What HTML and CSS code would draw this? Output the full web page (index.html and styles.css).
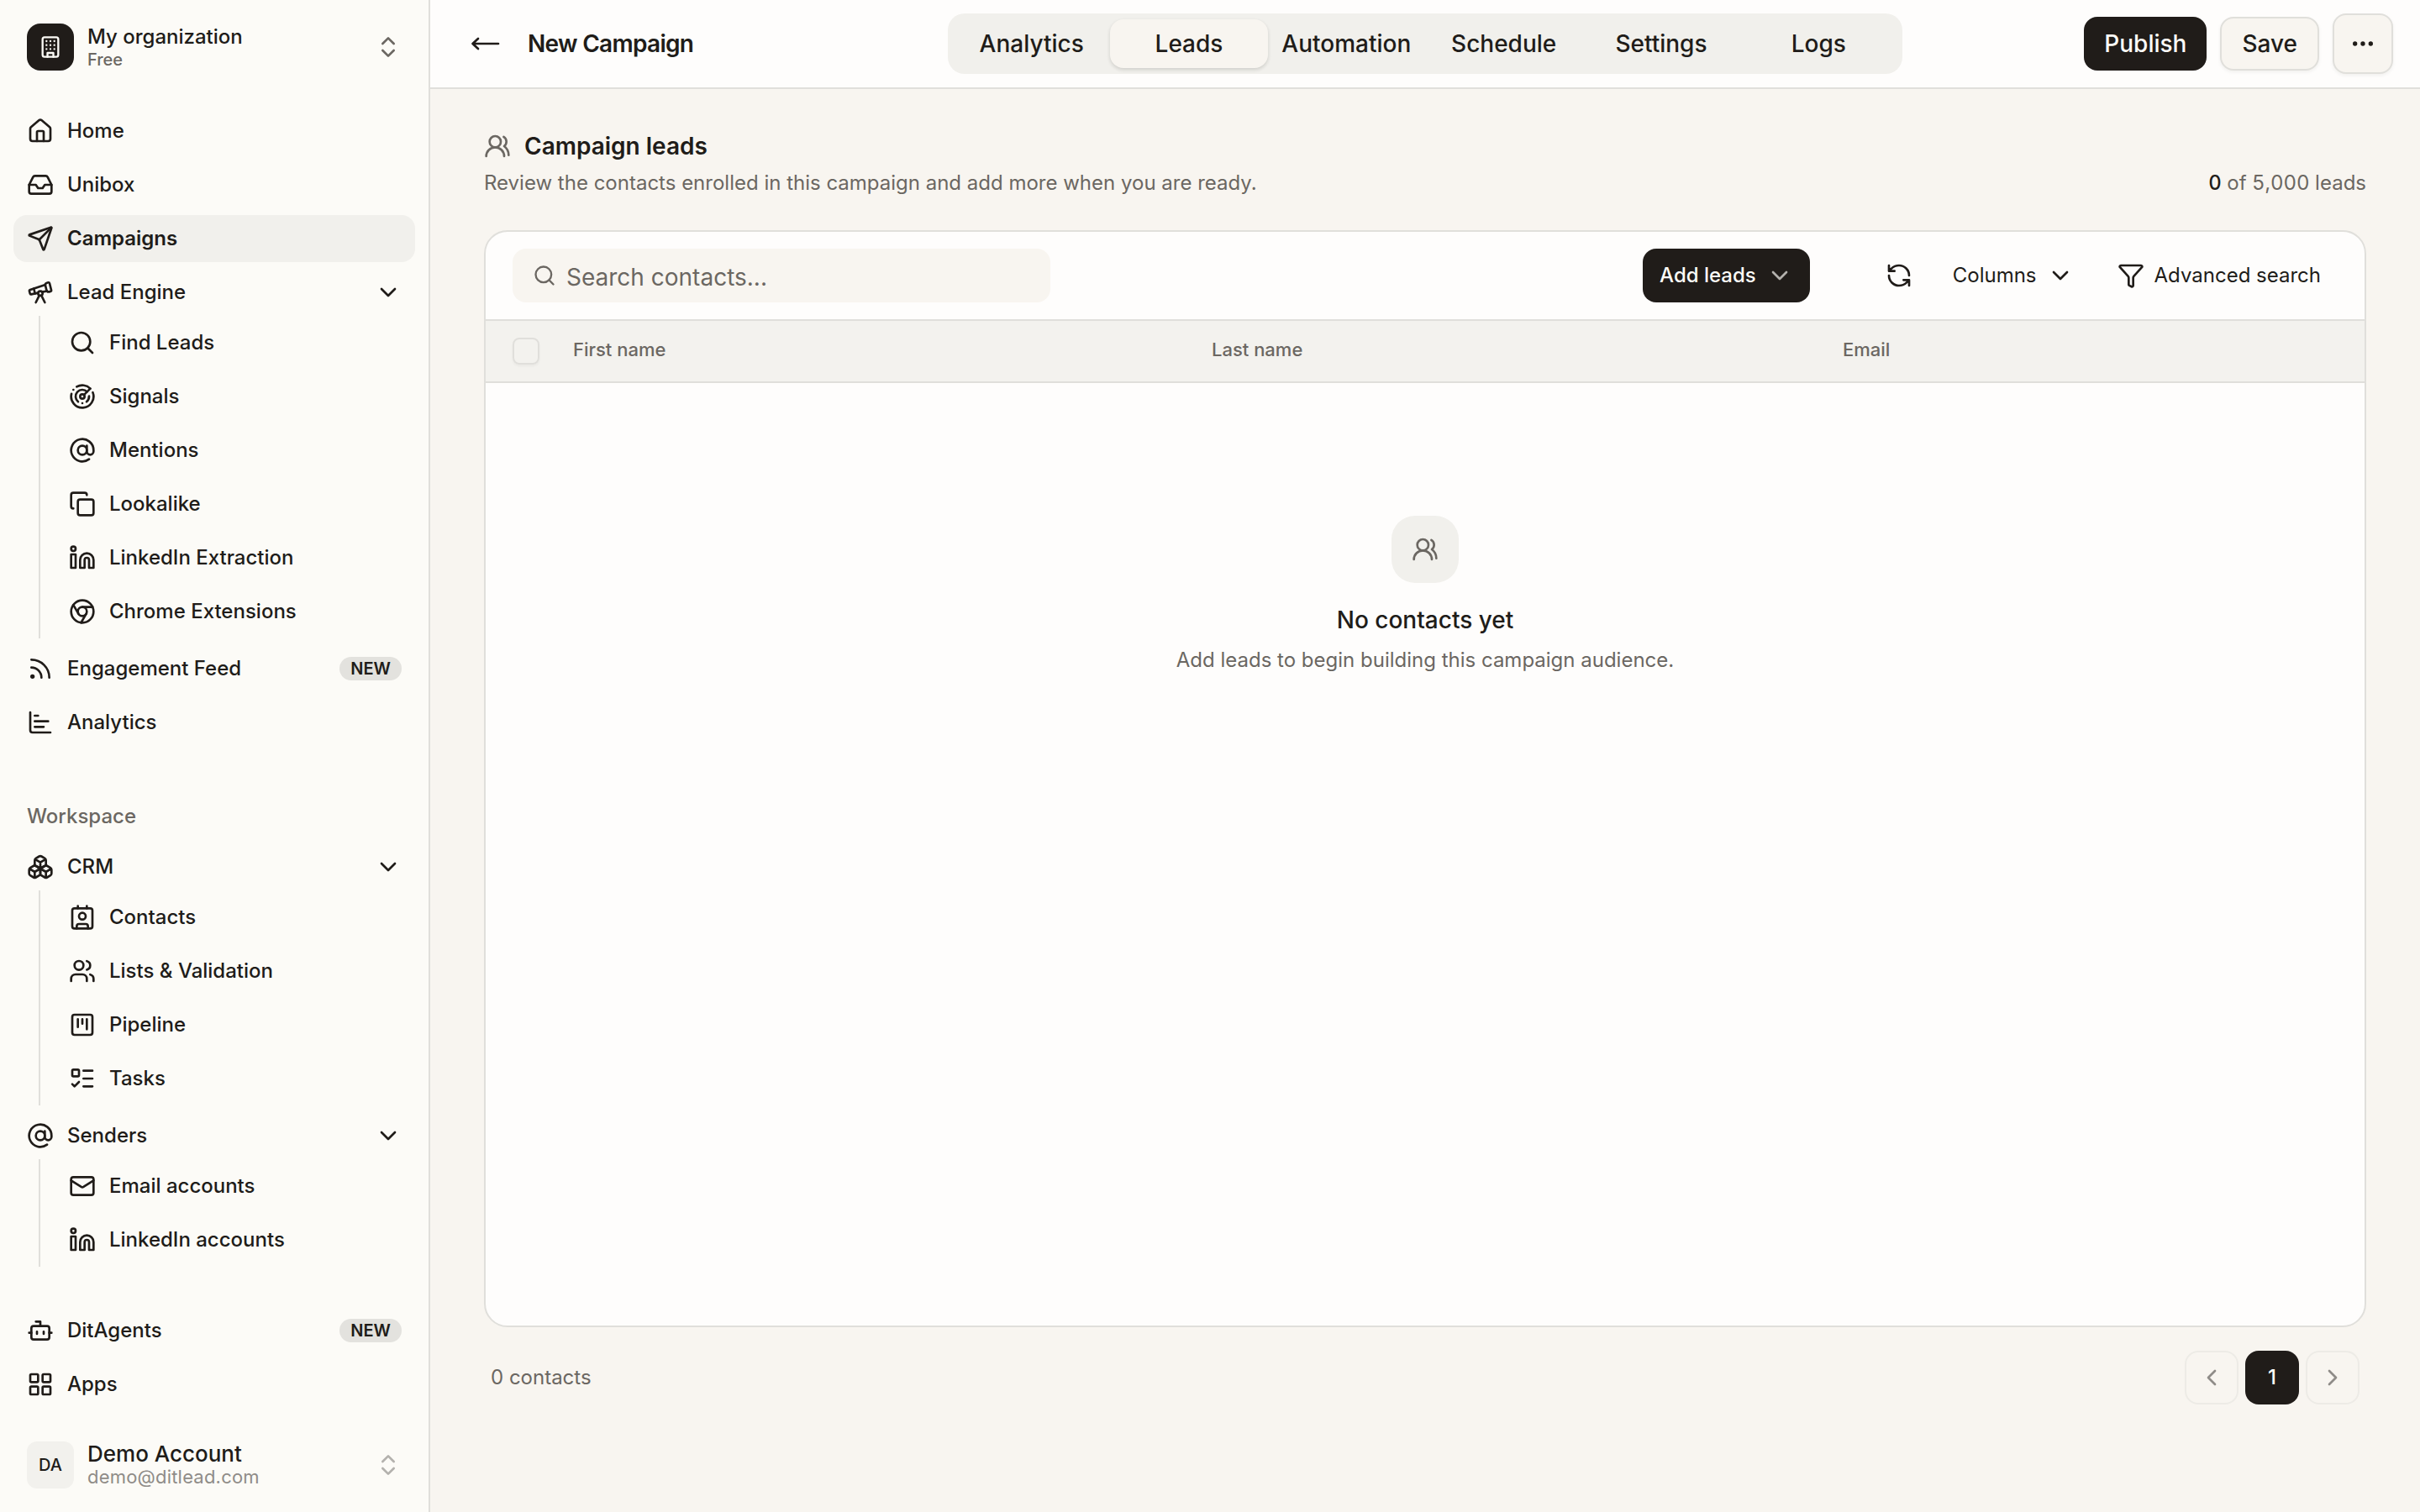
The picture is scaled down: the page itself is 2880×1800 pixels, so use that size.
FILE: index.html
```
<!DOCTYPE html>
<html lang="en">
<head>
  <meta charset="UTF-8" />
  <meta name="viewport" content="width=device-width,initial-scale=1.0" />
  <title>New Campaign | Leads</title>
  <link rel="stylesheet" href="styles.css">
</head>
<body>

<!-- SIDEBAR -->
<aside class="sidebar">
  <div class="org">
    <div class="org-logo">
      <svg class="icon" viewBox="0 0 24 24"><rect x="4" y="2" width="16" height="20" rx="2"/><path d="M9 22v-4h6v4M8 6h.01M16 6h.01M12 6h.01M12 10h.01M12 14h.01M16 10h.01M16 14h.01M8 10h.01M8 14h.01"/></svg>
    </div>
    <div class="who">
      <span class="who-name">My organization</span>
      <span class="who-plan">Free</span>
    </div>
    <svg class="icon end muted" viewBox="0 0 24 24"><path d="m7 15 5 5 5-5M7 9l5-5 5 5"/></svg>
  </div>

  <nav class="nav">
    <a class="nav-item" href="#"><svg class="icon" viewBox="0 0 24 24"><path d="M15 21v-8a1 1 0 0 0-1-1h-4a1 1 0 0 0-1 1v8"/><path d="M3 10a2 2 0 0 1 .709-1.528l7-5.999a2 2 0 0 1 2.582 0l7 5.999A2 2 0 0 1 21 10v9a2 2 0 0 1-2 2H5a2 2 0 0 1-2-2z"/></svg>Home</a>
    <a class="nav-item" href="#"><svg class="icon" viewBox="0 0 24 24"><path d="M22 12h-6l-2 3h-4l-2-3H2"/><path d="M5.45 5.11 2 12v6a2 2 0 0 0 2 2h16a2 2 0 0 0 2-2v-6l-3.45-6.89A2 2 0 0 0 16.76 4H7.24a2 2 0 0 0-1.79 1.11z"/></svg>Unibox</a>
    <a class="nav-item active" href="#"><svg class="icon" viewBox="0 0 24 24"><path d="M14.536 21.686a.5.5 0 0 0 .937-.024l6.5-19a.496.496 0 0 0-.635-.635l-19 6.5a.5.5 0 0 0-.024.937l7.93 3.18a2 2 0 0 1 1.112 1.11z"/><path d="m21.854 2.147-10.94 10.939"/></svg>Campaigns</a>
    <a class="nav-item" href="#"><svg class="icon" viewBox="0 0 24 24"><path d="m10.065 12.493-6.18 1.318a.934.934 0 0 1-1.108-.702l-.537-2.15a1.07 1.07 0 0 1 .691-1.265l13.504-4.44M13.56 11.747l4.332-.924M16 21l-3.105-6.21"/><path d="M16.485 5.94a2 2 0 0 1 1.455-2.425l1.09-.272a1 1 0 0 1 1.212.727l1.515 6.06a1 1 0 0 1-.727 1.213l-1.09.272a2 2 0 0 1-2.425-1.455zM6.158 8.633l1.114 4.456M8 21l3.105-6.21"/><circle cx="12" cy="13" r="2"/></svg>Lead Engine<svg class="icon end" viewBox="0 0 24 24"><path d="m6 9 6 6 6-6"/></svg></a>
    <div class="subnav">
      <a class="nav-item" href="#"><svg class="icon" viewBox="0 0 24 24"><path d="m21 21-4.34-4.34"/><circle cx="11" cy="11" r="8"/></svg>Find Leads</a>
      <a class="nav-item" href="#"><svg class="icon" viewBox="0 0 24 24"><path d="M19.07 4.93A10 10 0 0 0 6.99 3.34M4 6h.01M2.29 9.62A10 10 0 1 0 21.31 8.35"/><path d="M16.24 7.76A6 6 0 1 0 8.23 16.67M12 18h.01M17.99 11.66A6 6 0 0 1 15.77 16.67"/><circle cx="12" cy="12" r="2"/><path d="m13.41 10.59 5.66-5.66"/></svg>Signals</a>
      <a class="nav-item" href="#"><svg class="icon" viewBox="0 0 24 24"><circle cx="12" cy="12" r="4"/><path d="M16 8v5a3 3 0 0 0 6 0v-1a10 10 0 1 0-4 8"/></svg>Mentions</a>
      <a class="nav-item" href="#"><svg class="icon" viewBox="0 0 24 24"><rect x="8" y="8" width="14" height="14" rx="2"/><path d="M4 16c-1.1 0-2-.9-2-2V4c0-1.1.9-2 2-2h10c1.1 0 2 .9 2 2"/></svg>Lookalike</a>
      <a class="nav-item" href="#"><svg class="icon" viewBox="0 0 24 24"><path d="M16 8a6 6 0 0 1 6 6v7h-4v-7a2 2 0 0 0-4 0v7h-4v-7a6 6 0 0 1 6-6z"/><rect x="2" y="9" width="4" height="12"/><circle cx="4" cy="4" r="2"/></svg>LinkedIn Extraction</a>
      <a class="nav-item" href="#"><svg class="icon" viewBox="0 0 24 24"><circle cx="12" cy="12" r="10"/><circle cx="12" cy="12" r="4"/><path d="M21.17 8H12M3.95 6.06 8.54 14M10.88 21.94 15.46 14"/></svg>Chrome Extensions</a>
    </div>
    <a class="nav-item" href="#"><svg class="icon" viewBox="0 0 24 24"><path d="M4 11a9 9 0 0 1 9 9M4 4a16 16 0 0 1 16 16"/><circle cx="5" cy="19" r="1"/></svg>Engagement Feed<span class="badge">NEW</span></a>
    <a class="nav-item" href="#"><svg class="icon" viewBox="0 0 24 24"><path d="M3 3v16a2 2 0 0 0 2 2h16M7 16h8M7 11h12M7 6h3"/></svg>Analytics</a>
  </nav>

  <h2 class="nav-title">Workspace</h2>
  <nav class="nav">
    <a class="nav-item" href="#"><svg class="icon" viewBox="0 0 24 24"><path d="M2.97 12.92A2 2 0 0 0 2 14.63v3.24a2 2 0 0 0 .97 1.71l3 1.8a2 2 0 0 0 2.06 0L12 19v-5.5l-5-3-4.03 2.42zM7 16.5l-4.74-2.85M7 16.5l5-3M7 16.5v5.17"/><path d="M12 13.5V19l3.97 2.38a2 2 0 0 0 2.06 0l3-1.8a2 2 0 0 0 .97-1.71v-3.24a2 2 0 0 0-.97-1.71L17 10.5l-5 3zM17 16.5l-5-3M17 16.5l4.74-2.85M17 16.5v5.17"/><path d="M7.97 4.42A2 2 0 0 0 7 6.13v4.37l5 3 5-3V6.13a2 2 0 0 0-.97-1.71l-3-1.8a2 2 0 0 0-2.06 0l-3 1.8zM12 8 7.26 5.15M12 8l4.74-2.85M12 13.5V8"/></svg>CRM<svg class="icon end" viewBox="0 0 24 24"><path d="m6 9 6 6 6-6"/></svg></a>
    <div class="subnav">
      <a class="nav-item" href="#"><svg class="icon" viewBox="0 0 24 24"><path d="M16 2v2M7 22v-2a2 2 0 0 1 2-2h6a2 2 0 0 1 2 2v2M8 2v2"/><circle cx="12" cy="11" r="3"/><rect x="3" y="4" width="18" height="18" rx="2"/></svg>Contacts</a>
      <a class="nav-item" href="#"><svg class="icon" viewBox="0 0 24 24"><path d="M16 21v-2a4 4 0 0 0-4-4H6a4 4 0 0 0-4 4v2M16 3.128a4 4 0 0 1 0 7.744M22 21v-2a4 4 0 0 0-3-3.87"/><circle cx="9" cy="7" r="4"/></svg>Lists &amp; Validation</a>
      <a class="nav-item" href="#"><svg class="icon" viewBox="0 0 24 24"><rect x="3" y="3" width="18" height="18" rx="2"/><path d="M8 7v7M12 7v4M16 7v9"/></svg>Pipeline</a>
      <a class="nav-item" href="#"><svg class="icon" viewBox="0 0 24 24"><path d="M13 5h8M13 12h8M13 19h8M3 17l2 2 4-4"/><rect x="3" y="4" width="6" height="6" rx="1"/></svg>Tasks</a>
    </div>
    <a class="nav-item" href="#"><svg class="icon" viewBox="0 0 24 24"><circle cx="12" cy="12" r="4"/><path d="M16 8v5a3 3 0 0 0 6 0v-1a10 10 0 1 0-4 8"/></svg>Senders<svg class="icon end" viewBox="0 0 24 24"><path d="m6 9 6 6 6-6"/></svg></a>
    <div class="subnav">
      <a class="nav-item" href="#"><svg class="icon" viewBox="0 0 24 24"><path d="m22 7-8.991 5.727a2 2 0 0 1-2.009 0L2 7"/><rect x="2" y="4" width="20" height="16" rx="2"/></svg>Email accounts</a>
      <a class="nav-item" href="#"><svg class="icon" viewBox="0 0 24 24"><path d="M16 8a6 6 0 0 1 6 6v7h-4v-7a2 2 0 0 0-4 0v7h-4v-7a6 6 0 0 1 6-6z"/><rect x="2" y="9" width="4" height="12"/><circle cx="4" cy="4" r="2"/></svg>LinkedIn accounts</a>
    </div>
  </nav>

  <nav class="nav nav-bottom">
    <a class="nav-item" href="#"><svg class="icon" viewBox="0 0 24 24"><path d="M12 8V4H8"/><rect x="4" y="8" width="16" height="12" rx="2"/><path d="M2 14h2M20 14h2M15 13v2M9 13v2"/></svg>DitAgents<span class="badge">NEW</span></a>
    <a class="nav-item" href="#"><svg class="icon" viewBox="0 0 24 24"><rect x="3" y="3" width="7" height="7" rx="1"/><rect x="14" y="3" width="7" height="7" rx="1"/><rect x="14" y="14" width="7" height="7" rx="1"/><rect x="3" y="14" width="7" height="7" rx="1"/></svg>Apps</a>
  </nav>

  <div class="account">
    <div class="avatar">DA</div>
    <div class="who">
      <span class="account-name">Demo Account</span>
      <span class="account-mail">demo@ditlead.com</span>
    </div>
    <svg class="icon end faint" viewBox="0 0 24 24"><path d="m7 15 5 5 5-5M7 9l5-5 5 5"/></svg>
  </div>
</aside>

<div class="main">
  <!-- TOP BAR -->
  <header class="topbar">
    <div class="topbar-left">
      <svg class="back" viewBox="0 0 36 36"><path d="M33 18H2.5M9 12l-6.5 6L9 24"/></svg>
      <h1>New Campaign</h1>
    </div>
    <nav class="tabs">
      <a href="#">Analytics</a>
      <a href="#" class="active">Leads</a>
      <a href="#">Automation</a>
      <a href="#">Schedule</a>
      <a href="#">Settings</a>
      <a href="#">Logs</a>
    </nav>
    <div class="topbar-right">
      <button class="btn dark">Publish</button>
      <button class="btn">Save</button>
      <button class="btn more"><svg class="icon" viewBox="0 0 24 24"><circle cx="5" cy="12" r="1"/><circle cx="12" cy="12" r="1"/><circle cx="19" cy="12" r="1"/></svg></button>
    </div>
  </header>

  <!-- CONTENT -->
  <main class="content">
    <div class="page-title">
      <svg class="people" viewBox="0 0 24 24"><circle cx="10" cy="8" r="5"/><path d="M18 21a8 8 0 0 0-16 0M22 20c0-3.37-2-6.5-4-8a5 5 0 0 0-.45-8.3"/></svg>
      <h2>Campaign leads</h2>
    </div>
    <div class="page-sub">
      <p>Review the contacts enrolled in this campaign and add more when you are ready.</p>
      <p class="count"><strong>0</strong> of 5,000 leads</p>
    </div>

    <section class="card">
      <div class="toolbar">
        <div class="search">
          <svg class="icon" viewBox="0 0 24 24"><path d="m21 21-4.34-4.34"/><circle cx="11" cy="11" r="8"/></svg>
          <span>Search contacts...</span>
        </div>
        <button class="add">Add leads<svg class="icon" viewBox="0 0 24 24"><path d="m6 9 6 6 6-6"/></svg></button>
        <svg class="icon refresh" viewBox="0 0 24 24"><path d="M21 12a9 9 0 0 0-9-9 9.75 9.75 0 0 0-6.74 2.74L3 8M3 3v5h5M3 12a9 9 0 0 0 9 9 9.75 9.75 0 0 0 6.74-2.74L21 16M16 16h5v5"/></svg>
        <button class="tool columns">Columns<svg class="icon" viewBox="0 0 24 24"><path d="m6 9 6 6 6-6"/></svg></button>
        <button class="tool advanced"><svg class="icon" viewBox="0 0 24 24"><path d="M10 20a1 1 0 0 0 .553.895l2 1A1 1 0 0 0 14 21v-7a2 2 0 0 1 .517-1.341L21.74 4.67A1 1 0 0 0 21 3H3a1 1 0 0 0-.742 1.67l7.225 7.989A2 2 0 0 1 10 14z"/></svg>Advanced search</button>
      </div>
      <div class="thead">
        <span class="check"></span>
        <span class="th">First name</span>
        <span class="th">Last name</span>
        <span class="th">Email</span>
      </div>
      <div class="empty">
        <div class="empty-icon">
          <svg class="people" viewBox="0 0 24 24"><circle cx="10" cy="8" r="5"/><path d="M18 21a8 8 0 0 0-16 0M22 20c0-3.37-2-6.5-4-8a5 5 0 0 0-.45-8.3"/></svg>
        </div>
        <h3>No contacts yet</h3>
        <p>Add leads to begin building this campaign audience.</p>
      </div>
    </section>

    <div class="pager">
      <span>0 contacts</span>
      <div class="pages">
        <button class="page off"><svg class="icon" viewBox="0 0 24 24"><path d="m15 18-6-6 6-6"/></svg></button>
        <button class="page current">1</button>
        <button class="page off"><svg class="icon" viewBox="0 0 24 24"><path d="m9 18 6-6-6-6"/></svg></button>
      </div>
    </div>
  </main>
</div>

</body>
</html>
```
FILE: styles.css
```
* {
  box-sizing: border-box;
  margin: 0;
  padding: 0;
}
body {
  display: flex;
  height: 1800px;
  font-family: Inter, sans-serif;
  font-size: 24px;
  line-height: 32px;
  color: #201c19;
  background-color: #f8f5f0;
  overflow: hidden;
}
a {
  color: inherit;
  text-decoration: none;
}
button {
  font: inherit;
  color: inherit;
  border: none;
  background: none;
}
.icon {
  width: 32px;
  height: 32px;
  flex-shrink: 0;
  fill: none;
  stroke: currentColor;
  stroke-width: 2;
  stroke-linecap: round;
  stroke-linejoin: round;
}
.end {
  margin-left: auto;
}
.muted {
  color: #6b6762;
}
.faint {
  color: #b3b1ad;
}

/* SIDEBAR */
.sidebar {
  width: 512px;
  flex-shrink: 0;
  display: flex;
  flex-direction: column;
  padding: 28px 16px;
  background-color: #fcfbf7;
  border-right: 2px solid #e0dfdb;
}
.org,
.account {
  display: flex;
  align-items: center;
  height: 56px;
  padding: 0 16px;
}
.org-logo,
.avatar {
  width: 56px;
  height: 56px;
  margin-right: 16px;
  display: flex;
  align-items: center;
  justify-content: center;
  border-radius: 16px;
}
.org-logo {
  color: #fcfbf7;
  background-color: #201c19;
}
.org-logo .icon {
  width: 28px;
  height: 28px;
}
.avatar {
  font-size: 20px;
  font-weight: 500;
  border-radius: 12px;
  background-color: #f2f1ed;
}
.who {
  display: flex;
  flex-direction: column;
}
.who-name {
  font-weight: 500;
  line-height: 30px;
}
.who-plan {
  font-size: 20px;
  font-weight: 500;
  line-height: 24px;
  color: #6b6762;
}
.account .who {
  padding-bottom: 2px;
}
.account-name {
  font-size: 26px;
  font-weight: 500;
  line-height: 30px;
}
.account-mail {
  font-size: 22px;
  line-height: 24px;
  letter-spacing: 0.2px;
  color: #8f8c88;
}
.nav {
  display: flex;
  flex-direction: column;
  gap: 8px;
}
.org + .nav {
  margin-top: 44px;
}
.nav-item {
  display: flex;
  align-items: center;
  gap: 16px;
  height: 56px;
  padding: 0 16px;
  font-weight: 500;
  border-radius: 16px;
}
.nav-item.active {
  font-weight: 600;
  background-color: #f1f0ec;
}
.subnav {
  display: flex;
  flex-direction: column;
  gap: 8px;
  margin: -8px 0 0 30px;
  padding: 4px 0 4px 18px;
  border-left: 2px solid #e0dfdb;
}
.badge {
  height: 28px;
  margin-left: auto;
  padding: 0 13px;
  font-size: 20px;
  font-weight: 600;
  line-height: 29px;
  border-radius: 14px;
  background-color: #e3e2de;
}
.nav-title {
  margin: 68px 16px 16px;
  font-size: 24px;
  font-weight: 500;
  color: #6b6762;
}
.nav-bottom {
  margin-top: auto;
  margin-bottom: 40px;
}

/* TOP BAR */
.main {
  flex: 1;
  display: flex;
  flex-direction: column;
}
.topbar {
  display: grid;
  grid-template-columns: 1fr auto 1fr;
  align-items: center;
  height: 106px;
  padding: 0 32px;
  background-color: #fefdfc;
  border-bottom: 2px solid #e0dfdb;
}
.topbar-left {
  display: flex;
  align-items: center;
  gap: 32px;
  padding-left: 16px;
}
.topbar-left h1 {
  font-size: 28px;
  font-weight: 600;
  letter-spacing: -0.7px;
}
.back {
  width: 36px;
  height: 36px;
  fill: none;
  stroke: currentColor;
  stroke-width: 2.7;
  stroke-linecap: round;
  stroke-linejoin: round;
}
.tabs {
  display: grid;
  grid-template-columns: repeat(6, 1fr);
  width: 1136px;
  height: 72px;
  padding: 7px 6px;
  border-radius: 20px;
  background-color: #f1f0ec;
}
.tabs a {
  display: flex;
  align-items: center;
  justify-content: center;
  font-size: 28px;
  font-weight: 500;
  border-radius: 16px;
}
.tabs a.active {
  background-color: #f8f5f0;
  box-shadow: 0 2px 4px rgba(32, 28, 25, 0.16);
}
.topbar-right {
  display: flex;
  align-items: center;
  justify-content: flex-end;
  gap: 16px;
}
.btn {
  height: 64px;
  padding: 0 24px;
  font-size: 28px;
  font-weight: 500;
  border: 2px solid #e0dfdb;
  border-radius: 16px;
  background-color: #f8f5f0;
  box-shadow: 0 2px 4px rgba(32, 28, 25, 0.06);
}
.btn.dark {
  color: #fcfbf7;
  border: none;
  background-color: #201c19;
  box-shadow: none;
}
.btn.more {
  display: flex;
  align-items: center;
  justify-content: center;
  width: 72px;
  height: 72px;
  padding: 0;
}

/* CONTENT */
.content {
  flex: 1;
  padding: 50px 64px 128px;
}
.people {
  width: 32px;
  height: 32px;
  fill: none;
  stroke: #6b6762;
  stroke-width: 2;
  stroke-linecap: round;
  stroke-linejoin: round;
}
.page-title {
  display: flex;
  align-items: center;
  gap: 16px;
  height: 36px;
}
.page-title h2 {
  font-size: 28px;
  font-weight: 600;
}
.page-sub {
  display: flex;
  justify-content: space-between;
  margin-top: 8px;
  line-height: 36px;
  color: #6b6762;
}
.count {
  font-variant-numeric: tabular-nums;
}
.count strong {
  font-weight: 500;
  color: #201c19;
}
.card {
  height: 1306px;
  margin-top: 38px;
  border: 2px solid #e0dfdb;
  border-radius: 28px;
  background-color: #fefdfc;
  overflow: hidden;
}
.toolbar {
  display: flex;
  align-items: center;
  height: 104px;
  padding: 0 52px 0 32px;
}
.search {
  display: flex;
  align-items: center;
  gap: 12px;
  width: 640px;
  height: 64px;
  padding: 0 24px;
  font-size: 28px;
  color: #6b6762;
  border-radius: 16px;
  background-color: #f8f5f0;
}
.search span {
  padding-top: 3px;
}
.search .icon {
  width: 28px;
  height: 28px;
}
.add {
  display: flex;
  align-items: center;
  gap: 12px;
  height: 64px;
  margin-left: auto;
  padding: 0 20px;
  font-weight: 500;
  color: #fcfbf7;
  border-radius: 16px;
  background-color: #201c19;
}
.add .icon {
  color: #b3b1ad;
}
.refresh {
  margin-left: 90px;
}
.tool {
  display: flex;
  align-items: center;
  gap: 12px;
}
.columns {
  margin-left: 48px;
}
.advanced {
  margin-left: 52px;
}
.thead {
  display: grid;
  grid-template-columns: 72px 760px 751px 1fr;
  align-items: center;
  height: 76px;
  padding-left: 32px;
  font-size: 22px;
  font-weight: 500;
  color: #6b6762;
  border-top: 2px solid #e0dfdb;
  border-bottom: 2px solid #e0dfdb;
  background-color: #f3f2ee;
}
.th {
  padding-bottom: 4px;
}
.check {
  width: 32px;
  height: 32px;
  border: 2px solid #e0dfdb;
  border-radius: 8px;
  box-shadow: 0 2px 3px rgba(32, 28, 25, 0.04);
}
.empty {
  display: flex;
  flex-direction: column;
  align-items: center;
  padding-top: 158px;
}
.empty-icon {
  display: flex;
  align-items: center;
  justify-content: center;
  width: 80px;
  height: 80px;
  border-radius: 28px;
  background-color: #f1f0ec;
}
.empty h3 {
  margin-top: 24px;
  font-size: 28px;
  font-weight: 500;
  line-height: 40px;
}
.empty p {
  margin-top: 10px;
  line-height: 36px;
  color: #6b6762;
}

/* PAGINATION */
.pager {
  display: flex;
  align-items: center;
  justify-content: space-between;
  margin-top: 28px;
  padding: 0 8px;
  color: #6b6762;
}
.pages {
  display: flex;
  gap: 8px;
}
.page {
  display: flex;
  align-items: center;
  justify-content: center;
  width: 64px;
  height: 64px;
  font-weight: 500;
  border-radius: 16px;
}
.page.current {
  color: #fcfbf7;
  background-color: #201c19;
}
.page.off {
  color: #8f8c88;
  border: 2px solid #edebe6;
}
```
